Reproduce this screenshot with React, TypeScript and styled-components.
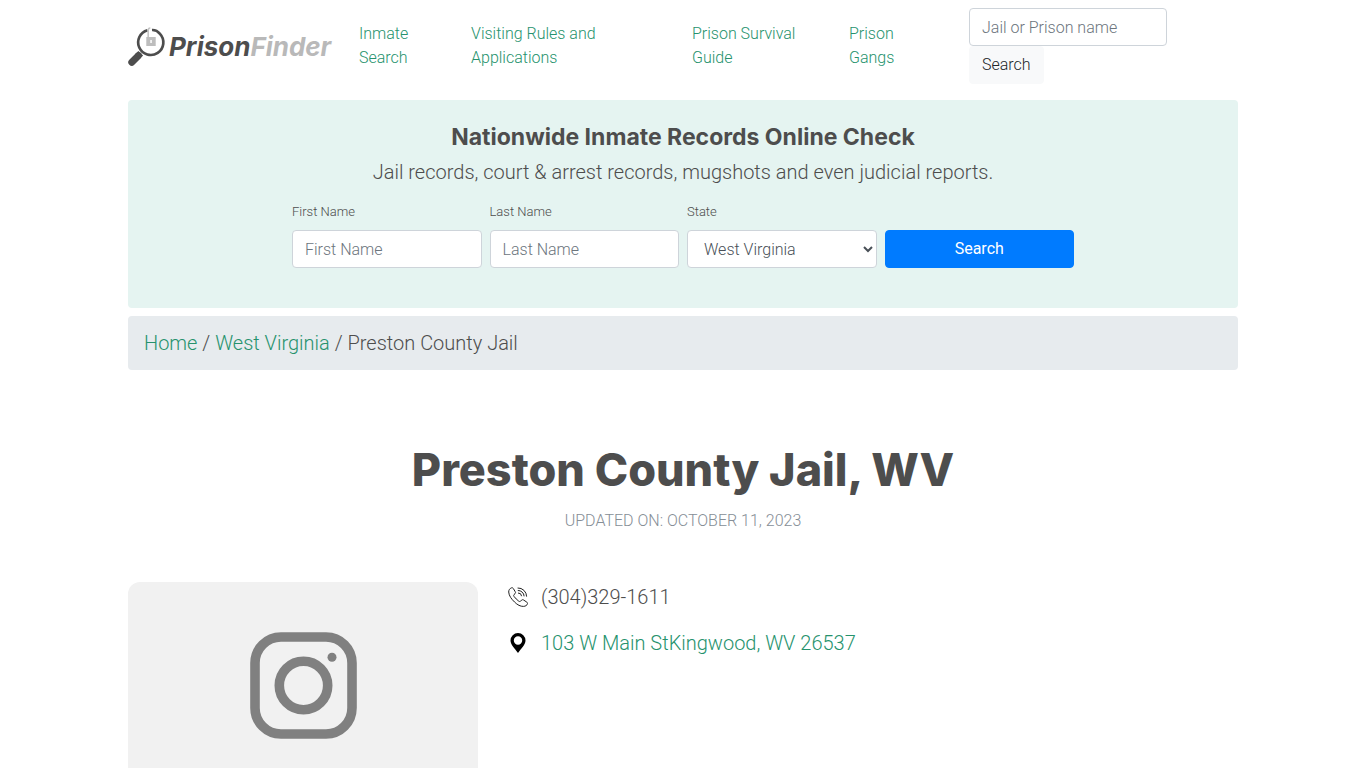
import React from 'react';
import styled, { createGlobalStyle, css } from 'styled-components';

const green = '#26926d';
const ink = '#4d4d4d';

const GlobalStyle = createGlobalStyle`
  *, *::before, *::after { box-sizing: border-box; }
  body {
    margin: 0;
    background: #fff;
    color: ${ink};
    font-family: Roboto, "Liberation Sans", sans-serif;
    font-size: 20px;
    font-weight: 300;
    line-height: 30px;
  }
  a { color: ${green}; text-decoration: none; }
  a:hover { text-decoration: underline; }
  h1, h2, p, ol, ul { margin: 0; padding: 0; }
`;

const Container = styled.div`
  max-width: 1140px;
  margin: 0 auto;
  padding: 0 15px;
`;

const Navbar = styled.header`
  display: flex;
  align-items: center;
  padding: 8px 0;
  margin-bottom: 8px;
`;

const Brand = styled.a`
  display: flex;
  align-items: center;
  gap: 2px;
  flex: none;
  width: 207px;
  margin-right: 16px;
  padding-top: 2px;
  color: ${ink};
  font: italic 700 26px/40px Inter, sans-serif;
  &:hover { text-decoration: none; }
`;

const BrandLight = styled.span`
  color: #b9b9b9;
`;

const NavList = styled.ul`
  display: flex;
  list-style: none;
  font-size: 16px;
  line-height: 24px;
`;

const NavItem = styled.li<{ $basis: number }>`
  flex: 0 1 ${(p) => p.$basis}px;
  padding: 8px 24px 8px 8px;
`;

const SiteSearch = styled.form`
  display: flex;
  flex-direction: column;
  align-items: flex-start;
  width: 198px;
  margin-left: 32px;
`;

const control = css`
  width: 100%;
  height: 38px;
  padding: 6px 12px;
  border: 1px solid #ced4da;
  border-radius: 4px;
  background: #fff;
  color: #495057;
  font: inherit;
  font-size: 16px;
  line-height: 24px;
`;

const TextInput = styled.input`
  ${control}
  &::placeholder { color: #6c757d; opacity: 1; }
`;

const Select = styled.select`
  ${control}
`;

const Button = styled.button<{ $primary?: boolean }>`
  height: 38px;
  padding: 6px 12px;
  border: 1px solid ${(p) => (p.$primary ? '#007bff' : '#f8f9fa')};
  border-radius: 4px;
  background: ${(p) => (p.$primary ? '#007bff' : '#f8f9fa')};
  color: ${(p) => (p.$primary ? '#fff' : '#212529')};
  font: inherit;
  font-size: 16px;
  font-weight: ${(p) => (p.$primary ? 400 : 300)};
  line-height: 24px;
  cursor: pointer;
`;

const Banner = styled.section`
  padding: 22px 16px 40px;
  margin-bottom: 8px;
  border-radius: 4px;
  background: #e5f4f1;
  text-align: center;
`;

const BannerTitle = styled.h2`
  margin-bottom: 5px;
  font: 700 23px/30px Inter, sans-serif;
`;

const RecordsForm = styled.form`
  display: grid;
  grid-template-columns: repeat(4, 1fr);
  align-items: end;
  gap: 8px;
  max-width: 782px;
  margin: 15px auto 0;
  text-align: left;
`;

const Field = styled.div`
  display: flex;
  flex-direction: column;
  gap: 8px;
`;

const Label = styled.label`
  font-size: 13px;
  line-height: 20px;
`;

const Breadcrumb = styled.nav`
  padding: 12px 16px;
  border-radius: 4px;
  background: #e7ebee;
`;

const Title = styled.h1`
  margin-top: 71px;
  font: 800 45px/58px Inter, sans-serif;
  text-align: center;
`;

const Updated = styled.p`
  margin: 10px 0 49px;
  color: #868e96;
  font-size: 16px;
  line-height: 24px;
  text-align: center;
  text-transform: uppercase;
`;

const Details = styled.section`
  display: grid;
  grid-template-columns: 350px 1fr;
  align-items: start;
  gap: 30px;
`;

const Photo = styled.div`
  display: flex;
  align-items: center;
  justify-content: center;
  height: 207px;
  border-radius: 12px;
  background: #f1f1f1;
`;

const ContactList = styled.ul`
  display: grid;
  gap: 16px;
  list-style: none;
`;

const Contact = styled.li`
  display: flex;
  align-items: center;
  gap: 13px;
`;

const LogoMark = () => (
  <svg width="39" height="40" viewBox="0 0 39 40" fill="none" aria-hidden="true">
    <path d="M19.5 3.2A12.6 12.6 0 1 0 32 6.8C30 4.4 27 2.8 24 3" stroke="#4d4d4d" strokeWidth="2.7" />
    <path d="M12.8 26 10.6 28.2" stroke="#4d4d4d" strokeWidth="3" />
    <path d="M9.8 29.2 3.8 35.2" stroke="#4d4d4d" strokeWidth="7" strokeLinecap="round" />
    <path d="M8.800 25.500 13.500 30.200" stroke="#4d4d4d" strokeWidth="4.500" />
    <path d="M20.2 11.5V3.2Q20.2 1 22.3 1.1" stroke="#c4c4c4" strokeWidth="1.6" />
    <path fillRule="evenodd" d="M18.3 10h9.4v9h-9.4zM22.3 13v3h1.5v-3z" fill="#bdbdbd" />
  </svg>
);

const PhotoMark = () => (
  <svg width="107" height="107" viewBox="0 0 107 107" fill="none" stroke="#808080" aria-hidden="true">
    <rect x="5" y="5" width="97" height="97" rx="26" strokeWidth="9.6" />
    <circle cx="53.5" cy="53.5" r="24.2" strokeWidth="9.6" />
    <circle cx="82" cy="25.3" r="4.5" fill="#808080" stroke="none" />
  </svg>
);

const PhoneIcon = () => (
  <svg width="20" height="20" viewBox="0 0 20 20" fill="none" stroke="#222" strokeWidth="1" strokeLinejoin="round" aria-hidden="true">
    <path d="M3.6.8C2 1.2.6 3 .7 5 1 9 3.5 12 6.5 15s6 4.5 9 4.4c2-.1 3.5-1.1 4-2.6.2-.8-.2-1.4-.9-1.8l-3-2c-.8-.5-1.5-.4-2.1.2l-.9 1c-.6.5-1.3.4-1.9-.1C9 12.8 7.3 11.2 6 9.4c-.5-.7-.5-1.3 0-1.8l1-.9c.6-.6.7-1.3.2-2L5.4 1.6C5 .9 4.3.6 3.6.8Z" />
    <path d="M9.6 1A8.6 8.6 0 0 1 18.6 9.6M9.8 3.5A6 6 0 0 1 16.1 9.3M10 6A3.500 3.500 0 0 1 13.600 9.200" />
  </svg>
);

const PinIcon = () => (
  <svg width="20" height="20" viewBox="0 0 20 20" aria-hidden="true">
    <path fillRule="evenodd" fill="#000" d="M10 0a7.500 7.500 0 0 0-7.500 7.500C2.500 11.500 6.500 15 10 20c3.500-5 7.500-8.500 7.500-12.500A7.500 7.500 0 0 0 10 0Zm0 3.300a4.200 4.200 0 1 1 0 8.400 4.200 4.200 0 0 1 0-8.400Z" />
  </svg>
);

const links = [
  { text: 'Inmate Search', basis: 112 },
  { text: 'Visiting Rules and Applications', basis: 221 },
  { text: 'Prison Survival Guide', basis: 157 },
  { text: 'Prison Gangs', basis: 96 },
];

export default function App() {
  return (
    <>
      <GlobalStyle />
      <Container>
        <Navbar>
          <Brand href="#" aria-label="PrisonFinder">
            <LogoMark />
            <span>Prison<BrandLight>Finder</BrandLight></span>
          </Brand>
          <nav>
            <NavList>
              {links.map((l) => (
                <NavItem key={l.text} $basis={l.basis}><a href="#">{l.text}</a></NavItem>
              ))}
            </NavList>
          </nav>
          <SiteSearch>
            <TextInput type="search" placeholder="Jail or Prison name" aria-label="Jail or Prison name" />
            <Button type="button">Search</Button>
          </SiteSearch>
        </Navbar>
        <main>
          <Banner>
            <BannerTitle>Nationwide Inmate Records Online Check</BannerTitle>
            <p>Jail records, court &amp; arrest records, mugshots and even judicial reports.</p>
            <RecordsForm>
              <Field>
                <Label htmlFor="first">First Name</Label>
                <TextInput id="first" placeholder="First Name" />
              </Field>
              <Field>
                <Label htmlFor="last">Last Name</Label>
                <TextInput id="last" placeholder="Last Name" />
              </Field>
              <Field>
                <Label htmlFor="state">State</Label>
                <Select id="state" defaultValue="WV">
                  <option value="WV">West Virginia</option>
                </Select>
              </Field>
              <Button type="button" $primary>Search</Button>
            </RecordsForm>
          </Banner>
          <Breadcrumb aria-label="Breadcrumb">
            <a href="#">Home</a> / <a href="#">West Virginia</a> / Preston County Jail
          </Breadcrumb>
          <Title>Preston County Jail, WV</Title>
          <Updated>Updated on: October 11, 2023</Updated>
          <Details>
            <Photo><PhotoMark /></Photo>
            <ContactList>
              <Contact><PhoneIcon /><span>(304)329-1611</span></Contact>
              <Contact><PinIcon /><a href="#">103 W Main StKingwood, WV 26537</a></Contact>
            </ContactList>
          </Details>
        </main>
      </Container>
    </>
  );
}
